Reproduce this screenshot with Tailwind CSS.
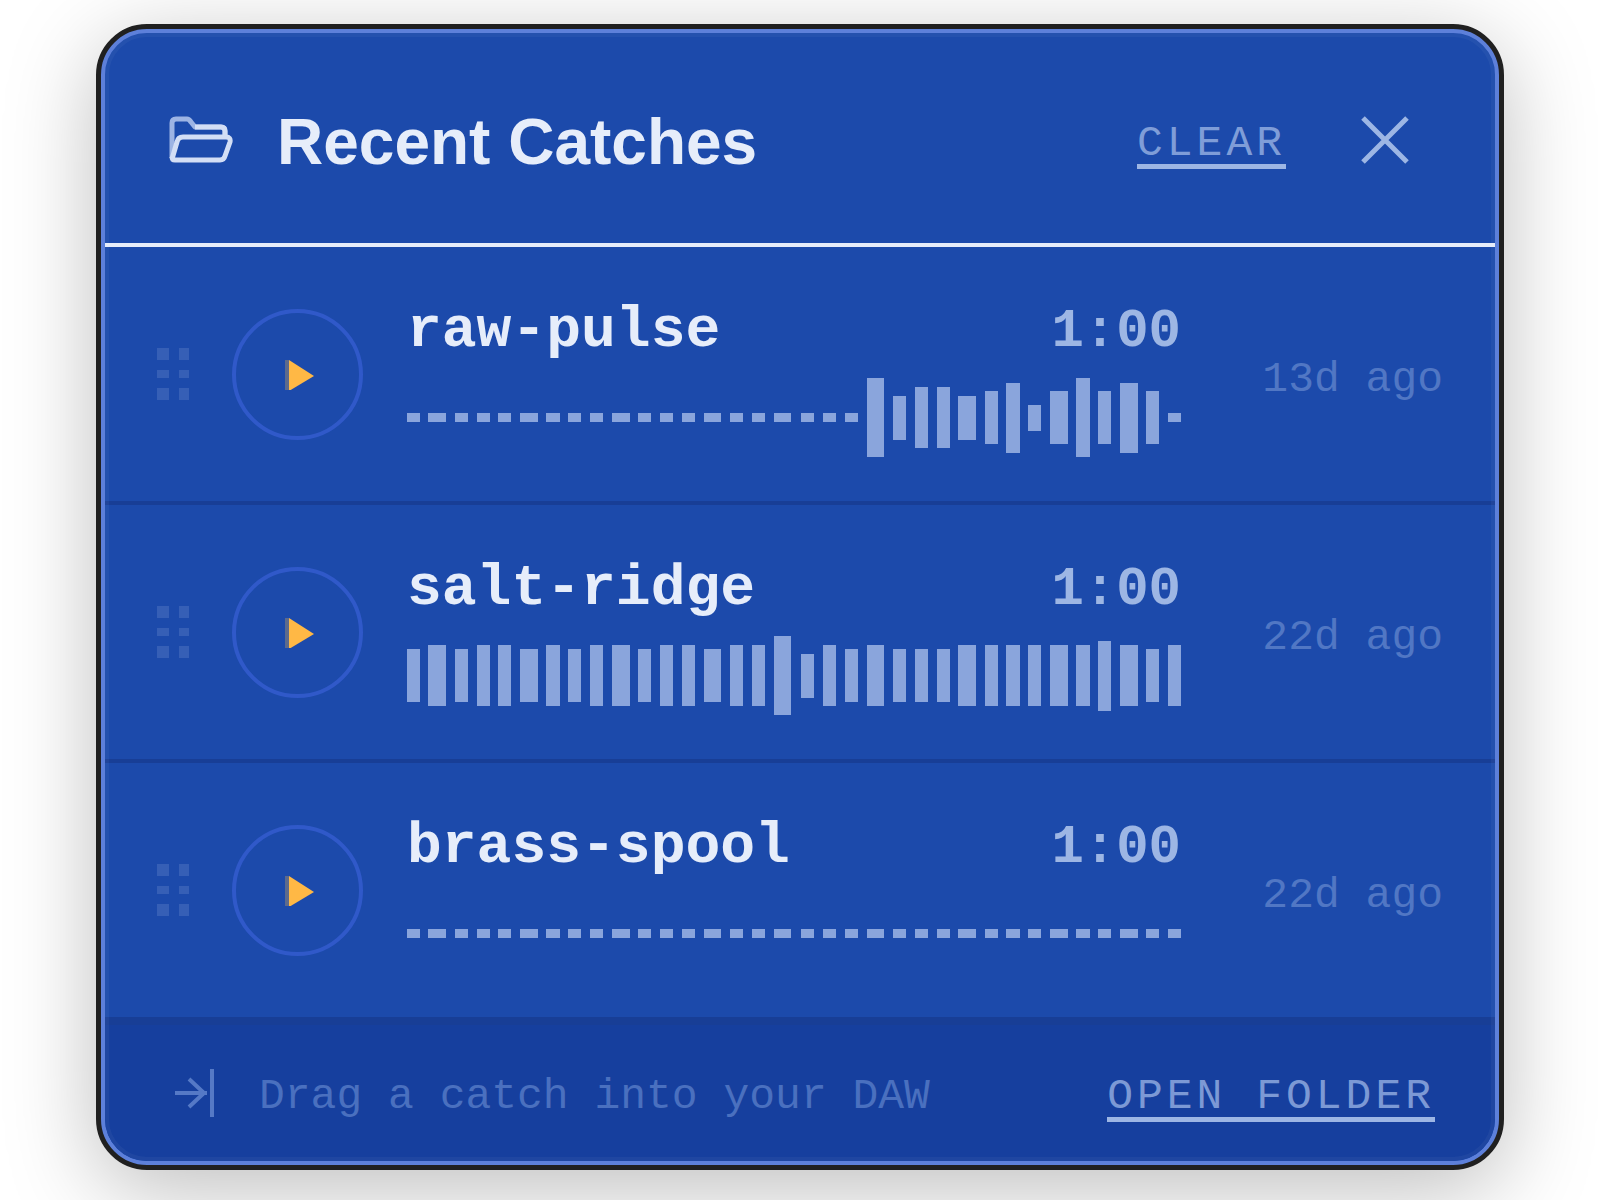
<!DOCTYPE html>
<html lang="en">
<head>
    <meta charset="UTF-8">
    <meta name="viewport" content="width=device-width, initial-scale=1.0">
    <title>Recent Catches</title>
    <script src="https://cdn.jsdelivr.net/npm/@tailwindcss/browser@4"></script>
</head>
<body class="min-h-screen bg-white px-24 py-6 font-['Liberation_Mono',monospace]">
    <main class="rounded-[51px] border-[5px] border-[#202020] bg-[#202020] shadow-[0_20px_90px_rgba(0,0,0,0.26)]">
        <div class="relative overflow-hidden rounded-[46px] border-4 border-[#5d80da] bg-[#1c4aab]">
            <header class="flex h-[214px] items-center border-b-4 border-[#e6edfa] pt-1 pr-[86px] pl-16">
                <svg class="h-12 w-16 shrink-0" viewBox="0 0 64 48" fill="none" stroke="#d3def5" stroke-width="5" stroke-linejoin="round" aria-hidden="true">
                    <path d="M3 42V7Q3 3 7 3H18Q20 3 22 6L26 11H52Q56 11 56 15V21" stroke="#9db4e4"/>
                    <path d="M26 11H52Q56 11 56 15V20"/>
                    <path d="M3 43L8 26Q9 21 14 21H57Q62 21 61 26L56 40Q55 44 51 44H6Q3 44 3 41"/>
                </svg>
                <h1 class="ml-11 pt-1 font-['Liberation_Sans',sans-serif] text-[64px] leading-[72px] font-bold text-[#e6edfa]">Recent Catches</h1>
                <button type="button" class="mt-3 ml-auto border-b-[5px] border-[#9db6e4] text-[43px] leading-10 tracking-[4px] text-[#7f9dd8]">CLEAR</button>
                <button type="button" aria-label="Close" class="ml-[75px]">
                    <svg class="block size-12" viewBox="0 0 48 48" stroke="#9db6e4" stroke-width="5" aria-hidden="true">
                        <path d="M2 2L46 46M46 2L2 46"/>
                    </svg>
                </button>
            </header>

            <ul>
                <li class="flex h-[258px] items-center border-b-4 border-[#183e96] px-[52px]">
                    <svg class="h-[52px] w-8 shrink-0 cursor-grab" viewBox="0 0 32 52" fill="#365fb6" aria-hidden="true">
                        <path d="M0 0h12v12H0zM22 0h10v12H22zM0 22h12v8H0zM22 22h10v8H22zM0 40h12v12H0zM22 40h10v12H22z"/>
                    </svg>
                    <button type="button" aria-label="Play raw-pulse" class="ml-[43px] flex size-[131px] shrink-0 items-center justify-center rounded-full border-4 border-[#3059c9]">
                        <svg class="size-8" viewBox="0 0 32 32" aria-hidden="true">
                            <path d="M3 2H7V33H3z" fill="#5d6a8c"/>
                            <path d="M7 2L32 18L7 33z" fill="#ffb845"/>
                        </svg>
                    </button>
                    <div class="ml-11 min-w-0 flex-1">
                        <div class="flex items-baseline justify-between pb-1.5 leading-[80px] font-bold">
                            <span class="text-[58px] text-[#e6edfa]">raw-pulse</span>
                            <span class="text-[54px] text-[#9db6e4]">1:00</span>
                        </div>
                        <svg class="block h-20 w-full" viewBox="0 0 773 80" preserveAspectRatio="none" fill="#8aa5dc" shape-rendering="crispEdges" aria-hidden="true" data-levels="9 9 9 9 9 9 9 9 9 9 9 9 9 9 9 9 9 9 9 9 79 44 61 61 44 53 70 26 53 79 53 70 53 9"></svg>
                    </div>
                    <time class="w-[262px] pt-3 text-right text-[43px] leading-[52px] text-[#5177c4]">13d ago</time>
                </li>

                <li class="flex h-[258px] items-center border-b-4 border-[#183e96] px-[52px]">
                    <svg class="h-[52px] w-8 shrink-0 cursor-grab" viewBox="0 0 32 52" fill="#365fb6" aria-hidden="true">
                        <path d="M0 0h12v12H0zM22 0h10v12H22zM0 22h12v8H0zM22 22h10v8H22zM0 40h12v12H0zM22 40h10v12H22z"/>
                    </svg>
                    <button type="button" aria-label="Play salt-ridge" class="ml-[43px] flex size-[131px] shrink-0 items-center justify-center rounded-full border-4 border-[#3059c9]">
                        <svg class="size-8" viewBox="0 0 32 32" aria-hidden="true">
                            <path d="M3 2H7V33H3z" fill="#5d6a8c"/>
                            <path d="M7 2L32 18L7 33z" fill="#ffb845"/>
                        </svg>
                    </button>
                    <div class="ml-11 min-w-0 flex-1">
                        <div class="flex items-baseline justify-between pb-1.5 leading-[80px] font-bold">
                            <span class="text-[58px] text-[#e6edfa]">salt-ridge</span>
                            <span class="text-[54px] text-[#9db6e4]">1:00</span>
                        </div>
                        <svg class="block h-20 w-full" viewBox="0 0 773 80" preserveAspectRatio="none" fill="#8aa5dc" shape-rendering="crispEdges" aria-hidden="true" data-levels="53 61 53 61 61 53 61 53 61 61 53 61 61 53 61 61 79 44 61 53 61 53 53 53 61 61 61 61 61 61 70 61 53 61"></svg>
                    </div>
                    <time class="w-[262px] pt-3 text-right text-[43px] leading-[52px] text-[#5177c4]">22d ago</time>
                </li>

                <li class="flex h-[258px] items-center border-b-4 border-[#183e96] px-[52px]">
                    <svg class="h-[52px] w-8 shrink-0 cursor-grab" viewBox="0 0 32 52" fill="#365fb6" aria-hidden="true">
                        <path d="M0 0h12v12H0zM22 0h10v12H22zM0 22h12v8H0zM22 22h10v8H22zM0 40h12v12H0zM22 40h10v12H22z"/>
                    </svg>
                    <button type="button" aria-label="Play brass-spool" class="ml-[43px] flex size-[131px] shrink-0 items-center justify-center rounded-full border-4 border-[#3059c9]">
                        <svg class="size-8" viewBox="0 0 32 32" aria-hidden="true">
                            <path d="M3 2H7V33H3z" fill="#5d6a8c"/>
                            <path d="M7 2L32 18L7 33z" fill="#ffb845"/>
                        </svg>
                    </button>
                    <div class="ml-11 min-w-0 flex-1">
                        <div class="flex items-baseline justify-between pb-1.5 leading-[80px] font-bold">
                            <span class="text-[58px] text-[#e6edfa]">brass-spool</span>
                            <span class="text-[54px] text-[#9db6e4]">1:00</span>
                        </div>
                        <svg class="block h-20 w-full" viewBox="0 0 773 80" preserveAspectRatio="none" fill="#8aa5dc" shape-rendering="crispEdges" aria-hidden="true" data-levels="9 9 9 9 9 9 9 9 9 9 9 9 9 9 9 9 9 9 9 9 9 9 9 9 9 9 9 9 9 9 9 9 9 9"></svg>
                    </div>
                    <time class="w-[262px] pt-3 text-right text-[43px] leading-[52px] text-[#5177c4]">22d ago</time>
                </li>
            </ul>

            <footer class="flex h-[140px] items-center border-t-4 border-[#183e96] bg-[#163f9e] pr-[60px] pl-[70px] text-[43px]">
                <svg class="h-12 w-10 shrink-0" viewBox="0 0 40 48" fill="none" stroke="#5579c6" stroke-width="4" aria-hidden="true">
                    <path d="M0 24H32M14 10L29 24L14 38M37 0V48"/>
                </svg>
                <p class="ml-11 pt-2 leading-[52px] text-[#4a70bf]">Drag a catch into your DAW</p>
                <button type="button" class="mt-3 ml-auto border-b-[5px] border-[#9db6e4] leading-10 tracking-[4px] text-[#7c99d5]">OPEN FOLDER</button>
            </footer>

            <!-- soft highlight along the inner edge -->
            <div class="pointer-events-none absolute inset-0 rounded-[42px] border-4 border-white/4"></div>
        </div>
    </main>

    <script>
        // [x, width] of every waveform bar
        const slots = [
            [0, 13], [21, 18], [48, 13], [70, 13], [91, 13], [113, 18], [139, 14], [161, 13], [183, 13],
            [205, 18], [231, 13], [253, 13], [275, 13], [297, 17], [323, 13], [345, 13], [367, 17], [393, 13],
            [415, 13], [437, 13], [459, 17], [485, 13], [507, 13], [529, 13], [550, 18], [577, 13], [598, 14],
            [620, 13], [642, 18], [668, 14], [690, 13], [712, 18], [738, 13], [760, 13]
        ];

        document.querySelectorAll('[data-levels]').forEach((svg) => {
            svg.dataset.levels.split(' ').map(Number).forEach((h, i) => {
                const bar = document.createElementNS('http://www.w3.org/2000/svg', 'rect');
                bar.setAttribute('x', slots[i][0]);
                bar.setAttribute('width', slots[i][1]);
                bar.setAttribute('y', Math.floor((80 - h) / 2));
                bar.setAttribute('height', h);
                svg.appendChild(bar);
            });
        });
    </script>
</body>
</html>
